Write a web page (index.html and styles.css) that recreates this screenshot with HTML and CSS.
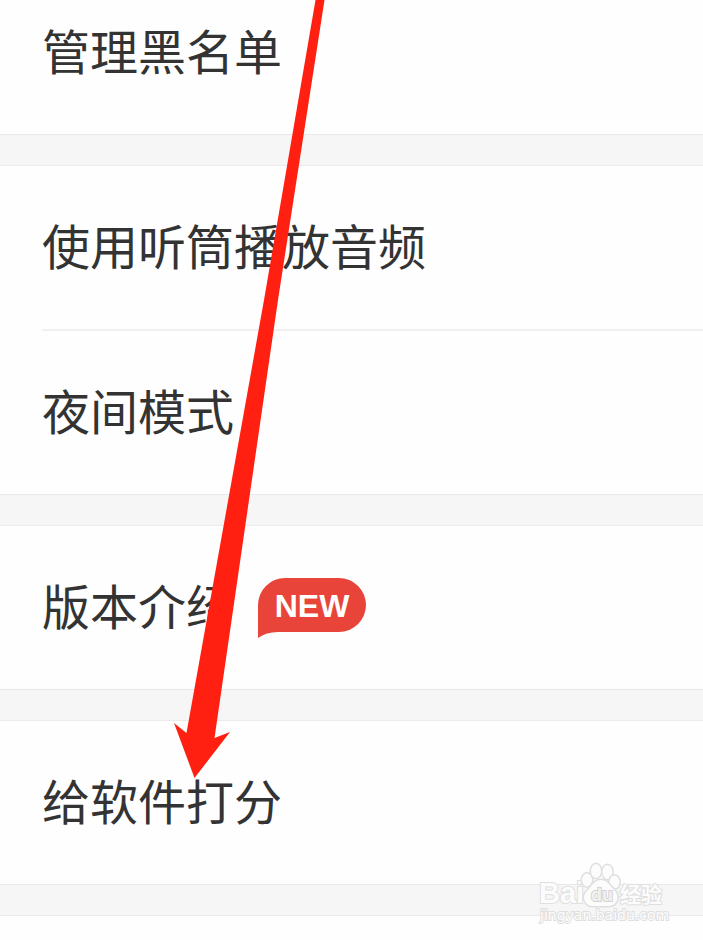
FILE: index.html
```html
<!DOCTYPE html>
<html lang="zh-CN">
<head>
<meta charset="utf-8">
<meta name="viewport" content="width=device-width, initial-scale=1">
<title>设置</title>
<link rel="stylesheet" href="styles.css">
</head>
<body>
<main class="settings">
  <section class="group">
    <a class="row" href="#blacklist">管理黑名单</a>
  </section>
  <section class="group">
    <a class="row" href="#earpiece">使用听筒播放音频</a>
    <a class="row" href="#night">夜间模式</a>
  </section>
  <section class="group">
    <a class="row" href="#version">版本介绍
      <span class="badge">
        <svg class="badge-shape" viewBox="0 0 108 60" aria-hidden="true"><path d="M27 0H81A27 27 0 0 1 81 54H20Q8 54 0 60V27A27 27 0 0 1 27 0Z"/></svg>
        <span class="badge-text">NEW</span>
      </span>
    </a>
  </section>
  <section class="group">
    <a class="row" href="#rate">给软件打分</a>
  </section>
</main>
<svg class="arrow" viewBox="0 0 703 940" aria-hidden="true"><path d="M315.5 0H324.5L278 300L214.5 738L230 732L194.500 778L174 723L186.500 733L264 300Z"/></svg>
<svg class="watermark" viewBox="0 0 136 66" role="img" aria-label="Baidu 经验">
  <g class="mark">
    <text class="latin" x="2" y="42">Bai</text>
    <g class="paw">
      <ellipse cx="50" cy="19" rx="5" ry="6.500"/>
      <ellipse cx="59" cy="10" rx="5" ry="7"/>
      <ellipse cx="70.500" cy="11" rx="5" ry="7"/>
      <ellipse cx="77.500" cy="21" rx="5" ry="6.500"/>
      <path d="M64 19C71 19 73 25 78 30C83 36 80 45 72 45H56C48 45 44 36 50 30C55 25 57 19 64 19Z"/>
    </g>
    <text class="du" x="54" y="40">du</text>
    <text class="cjk" x="83" y="41">经验</text>
    <text class="site" x="3" y="59">jingyan.baidu.com</text>
  </g>
</svg>
</body>
</html>
```
FILE: styles.css
```css
*,
*::after {
  box-sizing: border-box;
}

body {
  position: relative;
  margin: 0;
  min-height: 100vh;
  overflow: hidden;
  background: #fefefe;
  color: #333;
  font-family: "Noto Sans CJK SC", sans-serif;
}

.settings {
  margin-top: -29px;
}

.group {
  border-bottom: 32px solid #f6f6f6;
  position: relative;
}

.group::after {
  content: "";
  position: absolute;
  top: 100%;
  left: 0;
  right: 0;
  height: 32px;
  border-top: 1px solid #e9e9e9;
  border-bottom: 1px solid #ebebeb;
}

.row {
  display: flex;
  align-items: center;
  gap: 24px;
  height: 163px;
  padding-bottom: 7px;
  padding-left: 42px;
  color: inherit;
  font-size: 48px;
  line-height: 72px;
  text-decoration: none;
}

.row + .row {
  height: 165px;
  margin-left: 42px;
  padding-left: 0;
  border-top: 2px solid #f0f0f0;
}

.badge {
  display: grid;
  width: 108px;
  height: 60px;
  margin-top: 7px;
}

.badge-shape,
.badge-text {
  grid-area: 1 / 1;
}

.badge-shape {
  width: 108px;
  height: 60px;
  fill: #e84439;
}

.badge-text {
  color: #fff;
  font: bold 32px/56px "Liberation Sans", Arial, sans-serif;
  text-align: center;
}

.arrow {
  position: absolute;
  top: 0;
  left: 0;
  width: 703px;
  height: 940px;
  fill: #ff2012;
  pointer-events: none;
}

.watermark {
  position: absolute;
  right: 30px;
  bottom: 13px;
  width: 136px;
  height: 66px;
}

.mark {
  fill: #fcfcfc;
  stroke: #dfdfdf;
  stroke-width: 2px;
  paint-order: stroke;
  font-family: "Liberation Sans", Arial, sans-serif;
  font-weight: bold;
}

.latin {
  font-size: 29px;
}

.paw {
  stroke-width: 3px;
}

.du {
  fill: #f1f1f1;
  stroke: #d4d4d4;
  font-size: 18px;
}

.cjk {
  font-family: "Noto Sans CJK SC", sans-serif;
  font-size: 21px;
}

.site {
  font-family: "DejaVu Sans", Verdana, sans-serif;
  font-size: 14px;
  font-weight: normal;
}
```
